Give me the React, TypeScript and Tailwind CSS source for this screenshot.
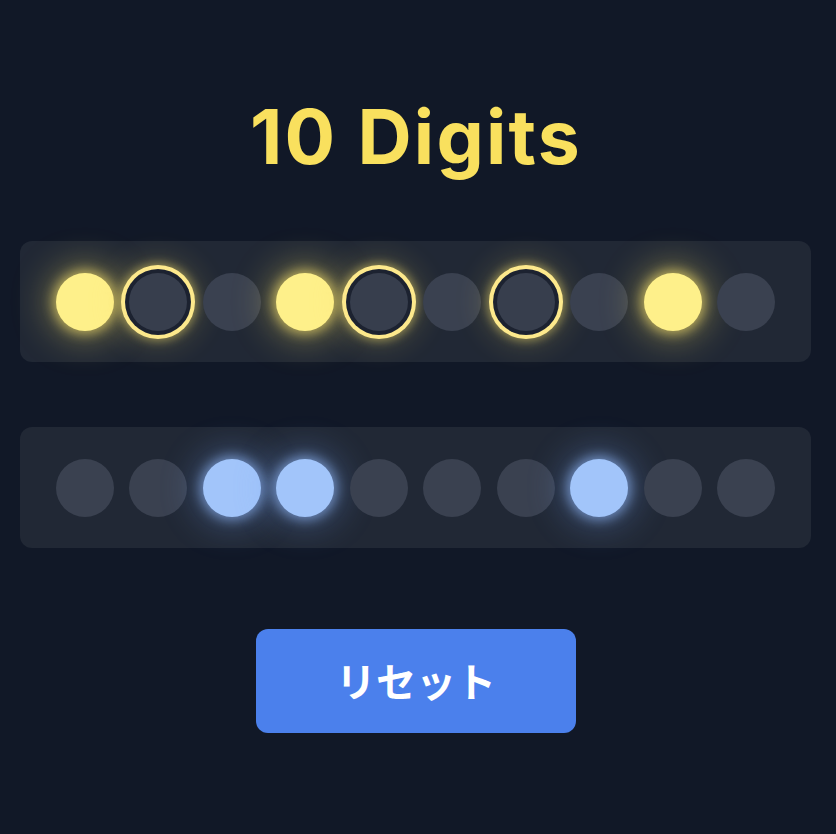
import React from "react";

const top = [1, 2, 0, 1, 2, 0, 2, 0, 1, 0];
const bottom = [0, 0, 1, 1, 0, 0, 0, 1, 0, 0];

function Dot({ kind, color }: { kind: number; color: "y" | "b" }) {
  if (kind === 1 && color === "y")
    return <div className="w-[58px] h-[58px] rounded-full bg-[#fef08a] shadow-[0_0_12px_3px_rgba(253,230,110,0.6),0_0_34px_10px_rgba(250,225,100,0.35)]" />;
  if (kind === 1 && color === "b")
    return <div className="w-[58px] h-[58px] rounded-full bg-[#a2c5fa] shadow-[0_0_12px_3px_rgba(150,190,255,0.6),0_0_34px_10px_rgba(120,165,245,0.3)]" />;
  if (kind === 2)
    return (
      <div className="w-[58px] h-[58px] rounded-full bg-[#373e4d] ring-4 ring-[#fde98c] ring-offset-4 ring-offset-[#1c2230] shadow-[0_0_10px_10px_rgba(253,230,110,0.45),0_0_30px_14px_rgba(250,225,100,0.2)]" />
    );
  return <div className="w-[58px] h-[58px] rounded-full bg-[#3a4150]" />;
}

export default function App() {
  return (
    <div className="min-h-[834px] w-full bg-[#111827] flex flex-col items-start" style={{ fontFamily: "Inter, 'Noto Sans CJK JP', sans-serif" }}>
      <div className="w-full flex justify-center pt-[93px] pr-[4px]">
        <h1 className="text-[75px] leading-[88px] font-bold tracking-[0.03em] text-[#f9e05e]">10 Digits</h1>
      </div>
      <div className="ml-5 mt-[60px] w-[791px] h-[121px] rounded-xl bg-[#212835] px-9 flex items-center justify-between">
        {top.map((k, i) => (
          <Dot key={i} kind={k} color="y" />
        ))}
      </div>
      <div className="ml-5 mt-[65px] w-[791px] h-[121px] rounded-xl bg-[#212835] px-9 flex items-center justify-between">
        {bottom.map((k, i) => (
          <Dot key={i} kind={k} color="b" />
        ))}
      </div>
      <div className="w-full flex justify-center mt-[81px] pr-[4px]">
        <button className="w-[320px] h-[104px] rounded-xl bg-[#4b80ec] text-white text-[40px] leading-none pb-[3px] font-bold" style={{ fontFamily: "'Noto Sans CJK JP', sans-serif" }}>
          リセット
        </button>
      </div>
    </div>
  );
}
